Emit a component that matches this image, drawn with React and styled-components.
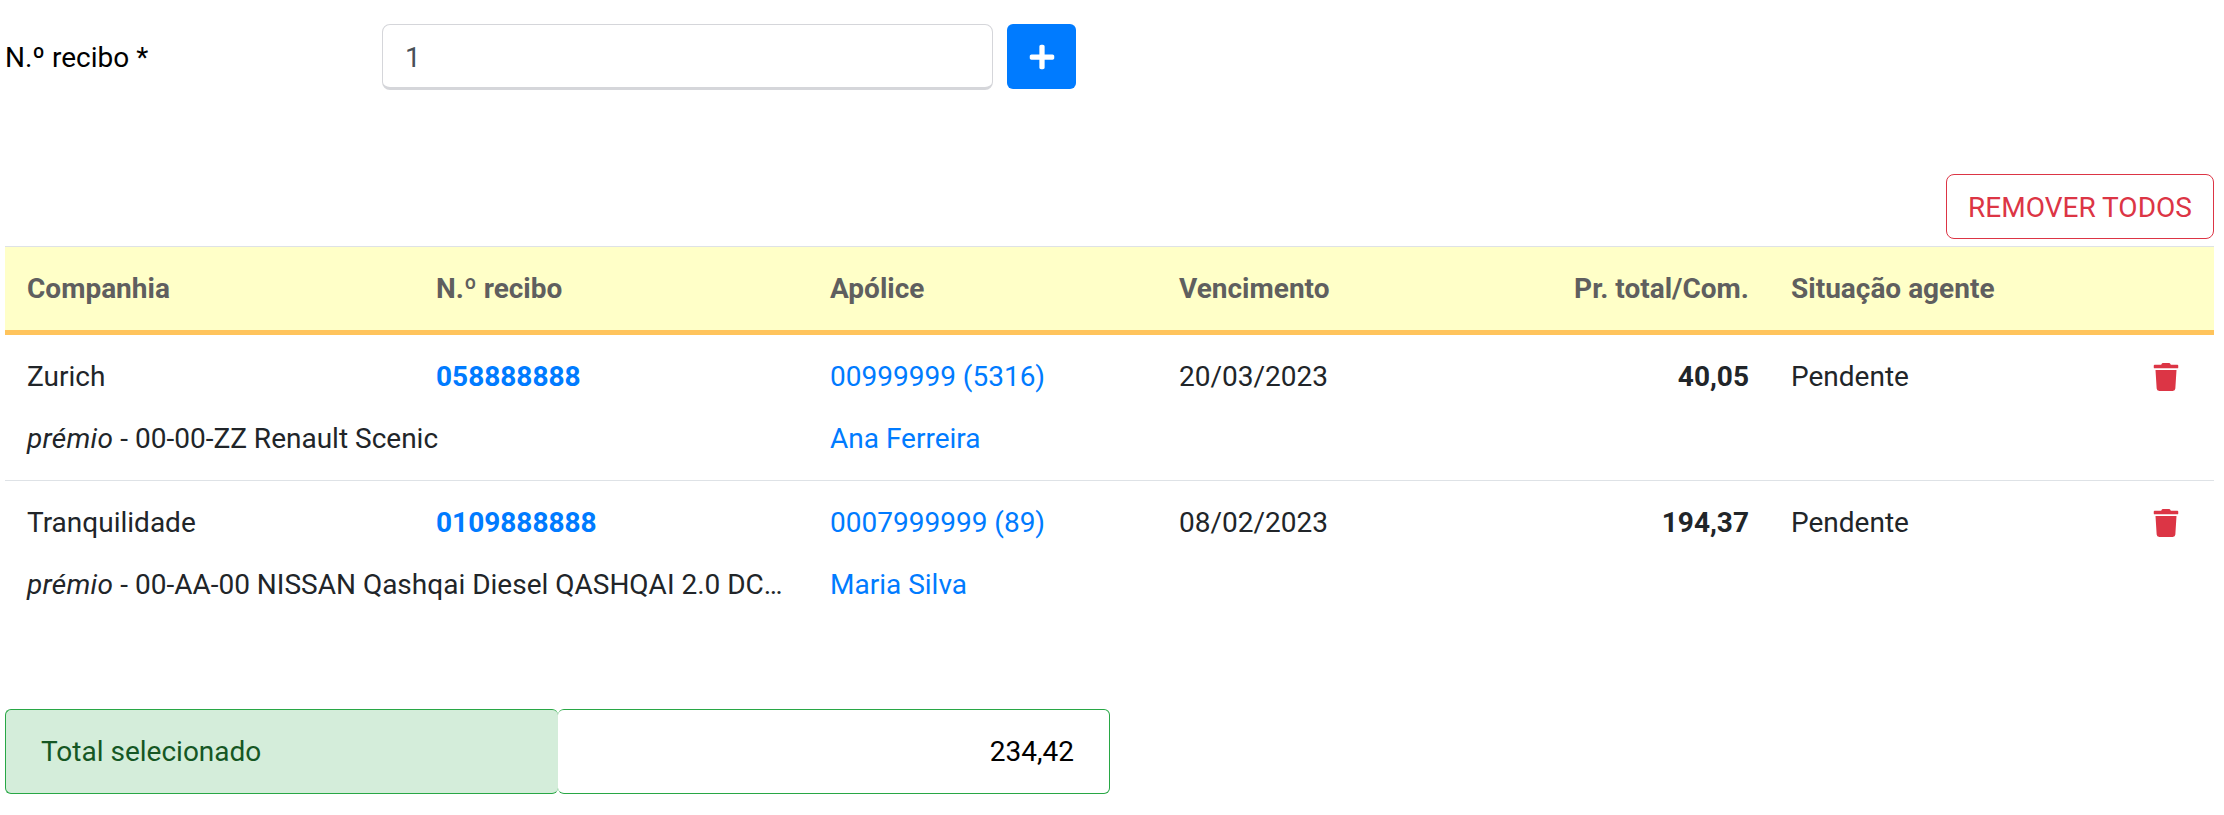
import styled, { createGlobalStyle } from "styled-components";
import { FaPlus, FaTrash } from "react-icons/fa";

const GlobalStyle = createGlobalStyle`
  body {
    margin: 0;
    background: #fff;
    font-family: Roboto, "Liberation Sans", sans-serif;
    color: #212529;
  }
`;

const Page = styled.div`
  width: 2224px;
  height: 815px;
  padding: 24px 10px 0 5px;
  box-sizing: border-box;
  overflow: hidden;
`;

const ReceiptForm = styled.form`
  display: flex;
  align-items: flex-start;
  height: 66px;
  margin: 0;
`;

const FieldLabel = styled.label`
  width: 377px;
  padding-top: 1px;
  font-size: 28px;
  line-height: 66px;
  color: #000;
`;

const ReceiptInput = styled.input`
  width: 611px;
  height: 66px;
  box-sizing: border-box;
  padding: 2px 22px 0;
  border: 1px solid #d5d6da;
  border-bottom: 3px solid #d5d6da;
  border-radius: 8px;
  font: 28px Roboto, sans-serif;
  color: #495057;
`;

const AddButton = styled.button`
  display: flex;
  align-items: center;
  justify-content: center;
  width: 69px;
  height: 65px;
  margin-left: 14px;
  padding: 0;
  border: 0;
  border-radius: 6px;
  background: #007bff;
  color: #fff;
  font-size: 28px;
`;

const Toolbar = styled.div`
  display: flex;
  justify-content: flex-end;
  margin-top: 84px;
`;

const RemoveAll = styled.button`
  width: 268px;
  height: 65px;
  padding: 2px 0 0;
  border: 1.5px solid #dc3545;
  border-radius: 8px;
  background: #fff;
  color: #dc3545;
  font: 28px Roboto, sans-serif;
`;

const Table = styled.table`
  width: 2209px;
  margin-top: 7px;
  table-layout: fixed;
  border-collapse: collapse;
  font-size: 28px;
`;

const Head = styled.thead`
  background: #ffffc8;
  color: #5f5f5f;
`;

const HeadCell = styled.th`
  height: 86px;
  padding: 0 21px;
  box-sizing: border-box;
  border-top: 1px solid #dee2e6;
  border-bottom: 5px solid #ffc45c;
  font-weight: 700;
  text-align: ${(props) => (props.$right ? "right" : "left")};
  &:first-child {
    padding-left: 22px;
  }
`;

const TopRow = styled.tr``;

const BottomRow = styled.tr`
  border-bottom: ${(props) => (props.$last ? "0" : "1px solid #dee2e6")};
`;

const Cell = styled.td`
  height: 64px;
  padding: 23px 21px 3px;
  box-sizing: border-box;
  line-height: 38px;
  white-space: nowrap;
  text-align: ${(props) => (props.$right ? "right" : "left")};
  font-weight: ${(props) => (props.$bold ? 700 : 400)};
  &:first-child {
    padding-left: 22px;
  }
`;

const SubCell = styled.td`
  height: 81px;
  padding: 21px 21px 22px;
  box-sizing: border-box;
  line-height: 38px;
  white-space: nowrap;
  overflow: hidden;
  text-overflow: ellipsis;
  &:first-child {
    padding-left: 22px;
  }
`;

const Kind = styled.em`
  letter-spacing: 0.3px;
`;

const ReceiptLink = styled.a`
  color: #007bff;
  font-weight: 700;
`;

const PolicyLink = styled.a`
  color: #007bff;
`;

const DeleteIcon = styled(FaTrash)`
  display: block;
  color: #dc3545;
  font-size: 28px;
  margin-left: -9px;
`;

const TotalBar = styled.div`
  display: flex;
  width: 1105px;
  height: 85px;
  margin-top: 83px;
  font-size: 28px;
`;

const TotalLabel = styled.div`
  display: flex;
  align-items: center;
  width: 553px;
  padding-left: 35px;
  box-sizing: border-box;
  background: #d4edda;
  color: #155724;
  border: 1px solid #28a745;
  border-right: 0;
  border-radius: 6px;
`;

const TotalValue = styled.div`
  display: flex;
  align-items: center;
  justify-content: flex-end;
  flex: 1;
  padding-right: 35px;
  box-sizing: border-box;
  color: #000;
  border: 1px solid #28a745;
  border-left: 0;
  border-radius: 6px;
`;

const columns = [
  { label: "Companhia", width: 410 },
  { label: "N.º recibo", width: 394 },
  { label: "Apólice", width: 349 },
  { label: "Vencimento", width: 221 },
  { label: "Pr. total/Com.", width: 391, right: true },
  { label: "Situação agente", width: 370 },
  { label: "", width: 74 },
];

const receipts = [
  {
    company: "Zurich",
    number: "058888888",
    policy: "00999999 (5316)",
    due: "20/03/2023",
    total: "40,05",
    status: "Pendente",
    detail: "00-00-ZZ Renault Scenic",
    client: "Ana Ferreira",
  },
  {
    company: "Tranquilidade",
    number: "0109888888",
    policy: "0007999999 (89)",
    due: "08/02/2023",
    total: "194,37",
    status: "Pendente",
    detail: "00-AA-00 NISSAN Qashqai Diesel QASHQAI 2.0 DCi 150cv",
    client: "Maria Silva",
    last: true,
  },
];

const App = () => {
  return (
    <Page>
      <GlobalStyle />
      <ReceiptForm>
        <FieldLabel>N.º recibo *</FieldLabel>
        <ReceiptInput defaultValue="1" />
        <AddButton type="button">
          <FaPlus />
        </AddButton>
      </ReceiptForm>

      <Toolbar>
        <RemoveAll type="button">REMOVER TODOS</RemoveAll>
      </Toolbar>

      <Table>
        <colgroup>
          {columns.map((column) => (
            <col key={column.label} width={column.width} />
          ))}
        </colgroup>
        <Head>
          <tr>
            {columns.map((column) => (
              <HeadCell key={column.label} $right={column.right}>
                {column.label}
              </HeadCell>
            ))}
          </tr>
        </Head>
        <tbody>
          {receipts.flatMap((receipt) => [
            <TopRow key={receipt.number}>
              <Cell>{receipt.company}</Cell>
              <Cell>
                <ReceiptLink>{receipt.number}</ReceiptLink>
              </Cell>
              <Cell>
                <PolicyLink>{receipt.policy}</PolicyLink>
              </Cell>
              <Cell>{receipt.due}</Cell>
              <Cell $right $bold>
                {receipt.total}
              </Cell>
              <Cell>{receipt.status}</Cell>
              <Cell>
                <DeleteIcon />
              </Cell>
            </TopRow>,
            <BottomRow key={receipt.number + "-detail"} $last={receipt.last}>
              <SubCell colSpan={2}>
                <Kind>prémio</Kind> - {receipt.detail}
              </SubCell>
              <SubCell colSpan={5}>
                <PolicyLink>{receipt.client}</PolicyLink>
              </SubCell>
            </BottomRow>,
          ])}
        </tbody>
      </Table>

      <TotalBar>
        <TotalLabel>Total selecionado</TotalLabel>
        <TotalValue>234,42</TotalValue>
      </TotalBar>
    </Page>
  );
};

export default App;
